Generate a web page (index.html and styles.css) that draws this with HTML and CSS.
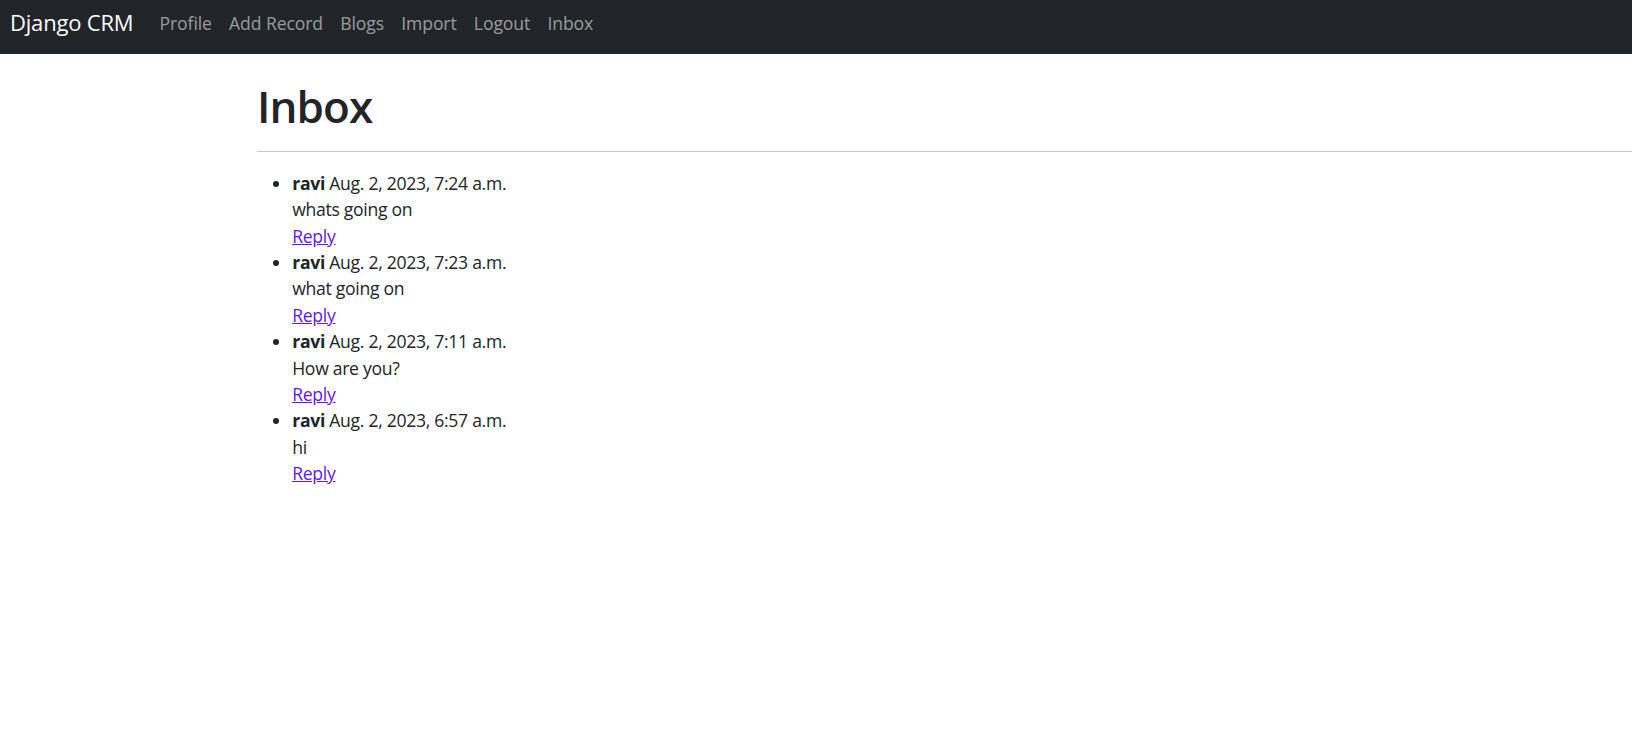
FILE: index.html
```html
<!DOCTYPE html>
<html lang="en">
<head>
<meta charset="utf-8">
<title>Inbox</title>
<link rel="stylesheet" href="styles.css">
</head>
<body>
<nav class="navbar">
  <a class="brand" href="#">Django CRM</a>
  <ul class="nav">
    <li><a class="nav-link" href="#">Profile</a></li>
    <li><a class="nav-link" href="#">Add Record</a></li>
    <li><a class="nav-link" href="#">Blogs</a></li>
    <li><a class="nav-link" href="#">Import</a></li>
    <li><a class="nav-link" href="#">Logout</a></li>
    <li><a class="nav-link" href="#">Inbox</a></li>
  </ul>
</nav>
<main class="content">
  <h1 class="title">Inbox</h1>
  <hr class="divider">
  <ul class="messages">
    <li><strong>ravi</strong> Aug. 2, 2023, 7:24 a.m.<br>whats going on<br><a class="reply" href="#">Reply</a></li>
    <li><strong>ravi</strong> Aug. 2, 2023, 7:23 a.m.<br>what going on<br><a class="reply" href="#">Reply</a></li>
    <li><strong>ravi</strong> Aug. 2, 2023, 7:11 a.m.<br>How are you?<br><a class="reply" href="#">Reply</a></li>
    <li><strong>ravi</strong> Aug. 2, 2023, 6:57 a.m.<br>hi<br><a class="reply" href="#">Reply</a></li>
  </ul>
</main>
</body>
</html>
```
FILE: styles.css
```css
html, body {
  margin: 0;
  padding: 0;
  background: #ffffff;
}

body {
  font-family: "Open Sans", "Noto Sans", sans-serif;
  font-size: 17.6px;
  line-height: 26.4px;
  color: #212529;
}

.navbar {
  display: flex;
  align-items: flex-start;
  height: 54px;
  background: #212529;
  padding-left: 10px;
  box-sizing: border-box;
}

.brand {
  font-size: 22px;
  line-height: 33px;
  padding-top: 6px;
  margin-right: 17.6px;
  color: #ffffff;
  text-decoration: none;
  white-space: nowrap;
  letter-spacing: -0.2px;
}

.nav {
  display: flex;
  list-style: none;
  margin: 0;
  padding: 0;
}

.nav-link {
  display: block;
  padding: 10px 8.6px 0;
  line-height: 26.4px;
  color: rgba(255, 255, 255, 0.55);
  text-decoration: none;
  white-space: nowrap;
  letter-spacing: -0.1px;
}

.content {
  margin-left: 257px;
}

.title {
  margin: 26px 0 0;
  font-size: 44px;
  line-height: 52.8px;
  font-weight: 560;
  letter-spacing: -0.9px;
}

.divider {
  margin: 18px 0 18px;
  border: 0;
  border-top: 1px solid #c8c9ca;
  height: 0;
}

.messages {
  margin: 0;
  padding-left: 35.2px;
  letter-spacing: -0.3px;
}

.messages strong {
  font-weight: 700;
}

.reply {
  color: #6219f0;
  text-decoration: underline;
}
```
